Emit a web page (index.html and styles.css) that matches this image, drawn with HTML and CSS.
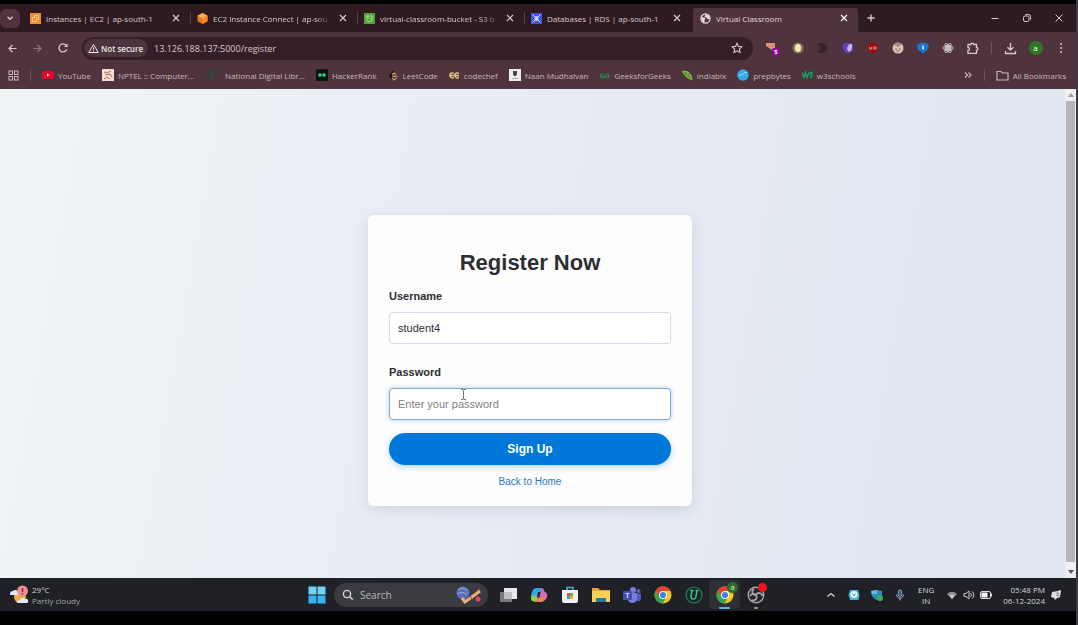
FILE: index.html
```html
<!DOCTYPE html>
<html lang="en">
<head>
<meta charset="utf-8">
<title>Virtual Classroom</title>
<link rel="stylesheet" href="styles.css">
</head>
<body>
<svg class="defs" aria-hidden="true">
  <symbol id="close" viewBox="0 0 10 10"><path d="M2 2l6 6M8 2l-6 6" fill="none" stroke="currentColor" stroke-width="1.2"/></symbol>
  <symbol id="chrome" viewBox="0 0 18 18">
    <circle cx="9" cy="9" r="8.5" fill="#f8c51c"/>
    <path d="M1.6 4.8A8.5 8.5 0 0 1 16.4 4.8L9 5 5.500 11z" fill="#e8402f"/>
    <path d="M1.600 4.800A8.500 8.500 0 0 0 8.600 17.500L12.400 11 9 9 5.500 11z" fill="#34a350"/>
    <circle cx="9" cy="9" r="4" fill="#fff"/><circle cx="9" cy="9" r="3.100" fill="#3f82ee"/>
  </symbol>
</svg>

<div class="screen">
  <header class="browser">
    <div class="tabs">
      <button class="tab-search" aria-label="Search tabs"><svg viewBox="0 0 10 10" class="i10"><path d="M2.500 3.800L5 6.300l2.500-2.500" fill="none" stroke="currentColor" stroke-width="1.400"/></svg></button>
      <div class="tab">
        <svg class="i11" viewBox="0 0 11 11"><rect width="11" height="11" fill="#ee8e35"/><path d="M2.500 4.500h4v4h-4zM4.500 4.500v-2h4v4h-2" fill="none" stroke="#ffc98c"/></svg>
        <span class="tab-title">Instances | EC2 | ap-south-1</span>
        <button class="tab-close" aria-label="Close tab"><svg class="i10"><use href="#close"/></svg></button>
      </div>
      <div class="tab">
        <svg class="i11" viewBox="0 0 11 11"><path d="M5.500 0l5 2.800v5.400l-5 2.800-5-2.800V2.800z" fill="#e9771b"/><path d="M5.500 0l5 2.800-5 2.700-5-2.700z" fill="#ffae55"/><path d="M5.500 5.500l5-2.700v5.400l-5 2.800z" fill="#f58a2b"/></svg>
        <span class="tab-title fade">EC2 Instance Connect | ap-sou</span>
        <button class="tab-close" aria-label="Close tab"><svg class="i10"><use href="#close"/></svg></button>
      </div>
      <div class="tab">
        <svg class="i11" viewBox="0 0 11 11"><rect width="11" height="11" fill="#53a43c"/><path d="M2.500 3h6l-1 5.500h-4zM2.500 3l4 3h3" fill="none" stroke="#a5d68d"/></svg>
        <span class="tab-title fade">virtual-classroom-bucket - S3 b</span>
        <button class="tab-close" aria-label="Close tab"><svg class="i10"><use href="#close"/></svg></button>
      </div>
      <div class="tab">
        <svg class="i11" viewBox="0 0 11 11"><rect width="11" height="11" fill="#4054de"/><path d="M1.500 1.500l2.500 2.500M9.500 1.500L7 4M1.500 9.500L4 7M9.500 9.500L7 7" stroke="#dfe3ff"/><ellipse cx="5.500" cy="5.500" rx="2" ry="2.500" fill="#c6d0ff"/></svg>
        <span class="tab-title">Databases | RDS | ap-south-1</span>
        <button class="tab-close" aria-label="Close tab"><svg class="i10"><use href="#close"/></svg></button>
      </div>
      <div class="tab active">
        <svg class="i11" viewBox="0 0 11 11"><circle cx="5.500" cy="5.500" r="4.600" fill="#4f343e" stroke="#e4dadd" stroke-width="1.200"/><path d="M1.500 4l3 .5 1 1.500-1 1v2.500C2 9 .8 6 1.500 4zM5.500 1l3.500 1.500 1 3-2 1-1.500-2-2-.5z" fill="#e4dadd"/></svg>
        <span class="tab-title">Virtual Classroom</span>
        <button class="tab-close" aria-label="Close tab"><svg class="i10"><use href="#close"/></svg></button>
      </div>
      <button class="new-tab" aria-label="New tab"><svg class="i10" viewBox="0 0 10 10"><path d="M5 1.500v7M1.500 5h7" stroke="currentColor" stroke-width="1.400"/></svg></button>
      <div class="window-controls">
        <button aria-label="Minimize"><svg class="i10" viewBox="0 0 10 10"><path d="M1.500 5.500h7" stroke="currentColor"/></svg></button>
        <button aria-label="Restore"><svg class="i10" viewBox="0 0 10 10"><rect x="1.500" y="3" width="5.500" height="5.500" rx="1.500" fill="none" stroke="currentColor"/><path d="M3.500 1.500h3a2 2 0 0 1 2 2v3" fill="none" stroke="currentColor"/></svg></button>
        <button aria-label="Close"><svg class="i10" viewBox="0 0 10 10"><path d="M1.500 1.500l7 7M8.500 1.500l-7 7" stroke="currentColor"/></svg></button>
      </div>
    </div>

    <div class="toolbar">
      <button class="slot" aria-label="Back"><svg class="i11" viewBox="0 0 12 12"><path d="M10.500 6H2.200M6 2.200L2.200 6 6 9.800" fill="none" stroke="currentColor" stroke-width="1.300"/></svg></button>
      <button class="slot dim" aria-label="Forward"><svg class="i11" viewBox="0 0 12 12"><path d="M1.500 6h8.300M6 2.200L9.800 6 6 9.800" fill="none" stroke="currentColor" stroke-width="1.300"/></svg></button>
      <button class="slot" aria-label="Reload"><svg class="i12" viewBox="0 0 12 12"><path d="M9.800 7.200A4 4 0 1 1 9 3.300l1 1" fill="none" stroke="currentColor" stroke-width="1.300"/><path d="M10.600 1.500v3.600H7z" fill="currentColor"/></svg></button>
      <div class="address">
        <button class="security"><svg class="i11" viewBox="0 0 11 11"><path d="M5.500 1.500l4.700 8H.8zM5.500 4.500v2.300M5.500 7.500v1" fill="none" stroke="currentColor"/></svg>Not secure</button>
        <input class="url" type="text" aria-label="Address" value="13.126.188.137:5000/register">
        <button class="star" aria-label="Bookmark this page"><svg class="i12" viewBox="0 0 12 12"><path d="M6 1.300l1.400 3.100 3.400.4-2.500 2.300.7 3.400L6 8.800l-3 1.700.7-3.400L1.200 4.800l3.400-.4z" fill="none" stroke="currentColor" stroke-width="1.100"/></svg></button>
      </div>
      <div class="extensions">
        <button class="slot" aria-label="Extension 1"><svg class="i16" viewBox="0 0 16 16"><path d="M1 3h9v5l-3 2-6-4z" fill="#d9967c"/><rect x="7" y="8" width="8" height="8" rx="2" fill="#8c098f"/><path d="M12.300 10.300h-2.500v1.600h2v1.800H9.600" fill="none" stroke="#fff" stroke-width=".9"/></svg></button>
        <button class="slot" aria-label="Extension 2"><svg class="i12" viewBox="0 0 12 12"><circle cx="6" cy="6" r="5.500" fill="#88745f"/><ellipse cx="6" cy="6" rx="3" ry="4" fill="#efedb3"/></svg></button>
        <button class="slot" aria-label="Extension 3"><svg class="i12" viewBox="0 0 12 12"><path d="M0 1h7l4 5-4 5H0l4-5z" fill="#352329"/></svg></button>
        <button class="slot" aria-label="Extension 4"><svg class="i12" viewBox="0 0 12 12"><path d="M6 .5l5 1.500v4c0 3-2.500 4.500-5 5.500C3.500 10.500 1 9 1 6V2z" fill="#6442bd"/><path d="M7 2.500l3-.5v4c-.3 2-1.500 3-3 4-3-3-2-5 0-7.500z" fill="#c7b6f4"/></svg></button>
        <button class="slot" aria-label="Extension 5"><svg class="i12" viewBox="0 0 12 12"><path d="M1 1.500L6 1l5 .5V7c0 2-3 3.500-5 4.500C4 10.500 1 9 1 7z" fill="#9c0e12"/><path d="M2.500 5v2h2V5m2 0v2h2.500V5H6.500" fill="none" stroke="#e59a92" stroke-width=".9"/></svg></button>
        <button class="slot" aria-label="Extension 6"><svg class="i12" viewBox="0 0 12 12"><circle cx="6" cy="6" r="5.500" fill="#dcc5b4"/><path d="M2 3c2-3 6-3 8 0L6 5z" fill="#a88a7a"/><path d="M3 7h2M7 7h2M4.500 9h3" stroke="#8b6258"/></svg></button>
        <button class="slot" aria-label="Extension 7"><svg class="i12" viewBox="0 0 12 12"><path d="M.5 2L6 .5 11.500 2v5L6 11.500.5 7z" fill="#1876d1"/><path d="M6 3.500v4" stroke="#fff" stroke-width="1.400"/></svg></button>
        <button class="slot" aria-label="Extension 8"><svg class="i12" viewBox="0 0 12 12"><g fill="none" stroke="#b9a6b0" stroke-width="1.100"><ellipse cx="6" cy="6" rx="5" ry="2"/><ellipse cx="6" cy="6" rx="5" ry="2" transform="rotate(60 6 6)"/><ellipse cx="6" cy="6" rx="5" ry="2" transform="rotate(120 6 6)"/></g><circle cx="6" cy="6" r="3.500" fill="#c9b9c2"/></svg></button>
        <button class="slot" aria-label="Extensions"><svg class="i13" viewBox="0 0 13 13"><path d="M2 2.500h3a1.400 1.400 0 0 1 2.800 0h2.700v3a1.400 1.400 0 0 1 0 2.800v3H2V8.500a1.500 1.500 0 0 0 0-3z" fill="none" stroke="currentColor" stroke-width="1.300"/></svg></button>
        <span class="rule"></span>
        <button class="slot" aria-label="Downloads"><svg class="i13" viewBox="0 0 13 13"><path d="M6.500 1v7M3.500 5.200l3 3 3-3M1.500 9v2.500h10V9" fill="none" stroke="currentColor" stroke-width="1.300"/></svg></button>
        <button class="slot" aria-label="Profile"><span class="avatar">a</span></button>
        <button class="slot" aria-label="Menu"><svg class="i12" viewBox="0 0 12 12" fill="currentColor"><circle cx="6" cy="2" r="1"/><circle cx="6" cy="6" r="1"/><circle cx="6" cy="10" r="1"/></svg></button>
      </div>
    </div>

    <nav class="bookmarks" aria-label="Bookmarks">
      <button class="apps" aria-label="Apps"><svg class="i11" viewBox="0 0 11 11" fill="none" stroke="currentColor"><rect x="1" y="1" width="3.500" height="3.500"/><rect x="6.500" y="1" width="3.500" height="3.500"/><rect x="1" y="6.500" width="3.500" height="3.500"/><rect x="6.500" y="6.500" width="3.500" height="3.500"/></svg></button>
      <span class="rule"></span>
      <a href="#"><svg class="i12" viewBox="0 0 12 12"><rect y="2" width="12" height="8" rx="2.500" fill="#e3082c"/><path d="M5 4.500v3L7.500 6z" fill="#fff"/></svg>YouTube</a>
      <a href="#"><svg class="i12" viewBox="0 0 12 12"><rect width="12" height="12" fill="#f0ded1"/><path d="M2 3l3 1 4-2M3 6l5-1 2 3M2 10l3-2 3 2" fill="none" stroke="#b56d62"/></svg>NPTEL :: Computer...</a>
      <a href="#"><svg class="i16" viewBox="0 0 16 16"><circle cx="6" cy="8" r="5" fill="#3f3e3c"/><path d="M4 5h4v6H4z" fill="#38463a"/></svg>National Digital Libr...</a>
      <a href="#"><svg class="i12" viewBox="0 0 12 12"><rect width="12" height="12" rx="1.500" fill="#09150f"/><path d="M2.500 4.500v3h3v-3zM6.500 4.500v3h3v-3z" fill="#41d98c"/></svg>HackerRank</a>
      <a href="#"><svg class="i11" viewBox="0 0 11 11"><path d="M6 1L2 5.500 5 9.500" fill="none" stroke="#19110f" stroke-width="1.700"/><path d="M4 4.500L6 3l2 1.500M4 8l2 2 2.500-2" fill="none" stroke="#d69c44" stroke-width="1.300"/><path d="M4.500 6.300h5" stroke="#c4b6b4"/></svg>LeetCode</a>
      <a href="#"><svg class="i11" viewBox="0 0 11 11"><path d="M5 3.500C1.500 1.500 0 5 1.500 7c1 1.500 2.500 1 3.500.5M1.500 5.500H5M10 3.500c-3.500-2-5 1.500-3.500 3.500 1 1.500 2.500 1 3.500.5M6.500 5.500H10" fill="none" stroke="#e6cc82" stroke-width="1.300"/></svg>codechef</a>
      <a href="#"><svg class="i12" viewBox="0 0 12 12"><rect width="12" height="12" fill="#eee"/><path d="M4 2h4v3L7 7H5L4 5z" fill="#444"/><path d="M3 9.500h6" stroke="#aaa"/></svg>Naan Mudhalvan</a>
      <a href="#"><svg class="i11" viewBox="0 0 11 11"><path d="M4.500 4C1 2.500 0 8 3 8c1.500 0 2-1 2-2H1M6.500 4C10 2.500 11 8 8 8 6.500 8 6 7 6 6h4" fill="none" stroke="#298348" stroke-width="1.200"/></svg>GeeksforGeeks</a>
      <a href="#"><svg class="i11" viewBox="0 0 11 11"><path d="M0 1c6-1 10 2 10.500 9.500C6 9 2 6 0 1z" fill="#84ba3d"/><path d="M1.500 2l8 7M4 2v3M7 3v4" stroke="#46702b" stroke-width=".8"/></svg>indiabix</a>
      <a href="#"><svg class="i12" viewBox="0 0 12 12"><circle cx="6" cy="6" r="5.700" fill="#35a9ee"/><path d="M2 7c2-3 3 0 4-2s3-2 4-1" fill="none" stroke="#a8e1ff"/></svg>prepbytes</a>
      <a href="#"><svg class="i11" viewBox="0 0 11 11"><path d="M0 2.500l2 5 1.500-5 1.500 5 2-5M7.500 2.500h2.800L8.500 4.500c2 0 2 3-.5 3" fill="none" stroke="#18a066" stroke-width="1.500"/></svg>w3schools</a>
      <button class="more" aria-label="More bookmarks"><svg class="i10" viewBox="0 0 10 10"><path d="M2 2.500L4.500 5 2 7.500M5.500 2.500L8 5 5.500 7.500" fill="none" stroke="currentColor" stroke-width="1.100"/></svg></button>
      <span class="rule"></span>
      <a href="#" class="all"><svg class="i13" viewBox="0 0 13 13"><path d="M1 2.500h4l1.500 1.500H12v7H1z" fill="none" stroke="currentColor" stroke-width="1.200"/></svg>All Bookmarks</a>
    </nav>
  </header>

  <div class="viewport">
    <main class="page">
      <form class="card">
        <h1>Register Now</h1>
        <label for="username">Username</label>
        <input id="username" type="text" placeholder="Enter your username" value="student4">
        <label for="password">Password</label>
        <div class="field">
          <input id="password" class="focused" type="password" placeholder="Enter your password">
          <svg class="cursor" viewBox="0 0 7 11" aria-hidden="true"><path d="M1 .5h2l.5.5.5-.5h2M3.500 1v9M1 10.500h2l.5-.5.5.5h2" fill="none" stroke="#777"/></svg>
        </div>
        <button type="button" class="submit">Sign Up</button>
        <a class="home" href="#">Back to Home</a>
      </form>
    </main>
    <div class="scrollbar" aria-hidden="true"><span class="arrow up"></span><span class="thumb"></span><span class="arrow down"></span></div>
  </div>

  <footer class="taskbar">
    <button class="weather">
      <svg class="i20" viewBox="0 0 20 20"><circle cx="11" cy="12" r="6" fill="#efad47"/><path d="M1 9a3 3 0 0 1 3-3 3 3 0 0 1 5 1l1 3H1zM8 18a3 3 0 0 1 3-3 3 3 0 0 1 5-1 2 2 0 0 1 2 4z" fill="#e2e9fb"/><circle cx="13.500" cy="6" r="5.500" fill="#ed8d93"/><path d="M13.500 3v4M13.500 8v1.200" stroke="#6d1b25" stroke-width="1.300"/></svg>
      <span>29°C<br><span class="muted">Partly cloudy</span></span>
    </button>
    <div class="dock">
      <button class="start" aria-label="Start"><svg class="i18" viewBox="0 0 18 18"><path d="M.5.500h8v8h-8zM9.500.500h8v8h-8z" fill="#6fd3f8"/><path d="M.5 9.500h8v8h-8zM9.500 9.500h8v8h-8z" fill="#35b3f3"/></svg></button>
      <label class="search">
        <svg class="i12" viewBox="0 0 12 12"><circle cx="5" cy="5" r="3.600" fill="none" stroke="currentColor" stroke-width="1.400"/><path d="M7.800 7.800l3 3" stroke="currentColor" stroke-width="1.600"/></svg>
        <input type="text" placeholder="Search" aria-label="Search">
        <svg class="art" viewBox="0 0 28 18"><circle cx="8" cy="7" r="6.500" fill="#5870b8"/><path d="M3 4c3-3 7-2 9 1M2 8c3-2 8-2 10 1" fill="none" stroke="#99aee8"/><path d="M7 12l3 4L25 5" fill="none" stroke="#e5b178" stroke-width="3"/><path d="M14 9l4 5M21 5l4-3" stroke="#9c4c38"/><circle cx="23" cy="13" r="2.500" fill="#e14568"/></svg>
      </label>
      <button class="app" aria-label="Task view"><svg class="i18" viewBox="0 0 18 18"><rect x="1" y="6" width="12" height="10" fill="#77797e"/><rect x="5" y="2" width="13" height="11" fill="#e8e8e8"/><path d="M5 6h8v7H5z" fill="#bfc0c2"/></svg></button>
      <button class="app" aria-label="Copilot"><svg class="i18" viewBox="0 0 18 18"><path d="M6 2h6l1 3-3 1-2 8-6 1C-.5 12 2 2 6 2z" fill="#30a6e5"/><path d="M1 10l5-1 2 5-2 2C2 16 .5 13 1 10z" fill="#93c74f"/><path d="M12 2c1.500 0 2 3 3 4 5 2 1 10-4 10H6l2-3 3-8z" fill="#d666bd"/><path d="M8 12l7-2c0 4-2 6-5 6H6z" fill="#f08051"/><path d="M8 6h2.500l-1 5.500H7z" fill="#24262b"/></svg></button>
      <button class="app" aria-label="Store"><svg class="i18" viewBox="0 0 18 18"><path d="M6 4V1.500h6V4" fill="none" stroke="#45aee0" stroke-width="1.500"/><path d="M1 4h16v11a2 2 0 0 1-2 2H3a2 2 0 0 1-2-2z" fill="#f0f0f0"/><path d="M6 7h3v3H6z" fill="#e25534"/><path d="M9 7h3v3H9z" fill="#73ae42"/><path d="M6 10h3v3H6z" fill="#389edc"/><path d="M9 10h3v3H9z" fill="#f0b42d"/></svg></button>
      <button class="app" aria-label="File Explorer"><svg class="i18" viewBox="0 0 18 18"><path d="M0 2h6l2 2h10v12H0z" fill="#e5a82d"/><path d="M0 5h18v11H0z" fill="#fad158"/><path d="M4 16v-4h10v4z" fill="#2379a7"/></svg></button>
      <button class="app" aria-label="Teams"><svg class="i18" viewBox="0 0 18 18"><circle cx="10" cy="4" r="3" fill="#7880df"/><circle cx="15.500" cy="5" r="2" fill="#5861bd"/><path d="M12 7.500h6V12c0 3-2 4-4 3z" fill="#515abb"/><path d="M5 7h9v6c0 5-8 5-9 1z" fill="#767ee0"/><rect y="5" width="9" height="9" rx="1" fill="#4850ad"/><path d="M2.500 7.500h4M4.500 7.500v4.500" stroke="#cdd0f5" stroke-width="1.200"/></svg></button>
      <button class="app" aria-label="Chrome"><svg class="i18"><use href="#chrome"/></svg></button>
      <button class="app" aria-label="Iobit Uninstaller"><svg class="i18" viewBox="0 0 18 18"><circle cx="9" cy="9" r="8" fill="#142a25" stroke="#2f7d5b" stroke-width="1.200"/><path d="M7 4.500L6 10c-.5 4 4.500 4 5 .5l1-6M5.500 4.500h3M10.500 4.500h3" fill="none" stroke="#48ba87" stroke-width="1.500"/></svg></button>
      <button class="app running" aria-label="Chrome, profile a"><svg class="i18"><use href="#chrome"/></svg><span class="badge">a</span></button>
      <button class="app idle" aria-label="OBS Studio"><svg class="i18" viewBox="0 0 18 18"><circle cx="9" cy="9" r="7.800" fill="#25262a" stroke="#a7a8ab" stroke-width="1.400"/><path d="M9 9C5 9 4 5 7 3M9 9c2-3.500 6-2 6.500 1M9 9c2 3.500-1 6.500-4.500 5M9 9c-2-2-5-1-6 1" fill="none" stroke="#a7a8ab" stroke-width="1.700"/></svg><span class="record"></span></button>
    </div>
    <div class="tray">
      <button aria-label="Hidden icons"><svg class="i12" viewBox="0 0 12 12"><path d="M2.500 7.500L6 4.500l3.500 3" fill="none" stroke="currentColor" stroke-width="1.300"/></svg></button>
      <button aria-label="Sync"><svg class="i12" viewBox="0 0 12 12"><path d="M2 1h8l1.500 5-1 5H2L.5 6z" fill="#49afd8"/><circle cx="6" cy="5.500" r="3.600" fill="#e1f4fb"/><path d="M4.500 4.500L6 7l1.500-2.500" fill="none" stroke="#5a9cc0"/></svg></button>
      <button aria-label="Security"><svg class="i12" viewBox="0 0 12 12"><path d="M0 2l6-1 5 1v4c0 3-3 4-5 5C2 10 0 6 0 2z" fill="#2b8dbb"/><path d="M0 2l6-1v4H1z" fill="#58bde3"/><circle cx="9" cy="9" r="3" fill="#35b34e"/></svg></button>
      <button aria-label="Microphone"><svg class="i12" viewBox="0 0 12 12"><rect x="4.300" y="1" width="3.400" height="6.500" rx="1.700" fill="#315c78" stroke="#9fb9c8" stroke-width=".8"/><path d="M2.700 5.500c0 5 6.600 5 6.600 0M6 9v2.500" fill="none" stroke="#9fb9c8"/></svg></button>
      <button class="lang">ENG<br>IN</button>
      <button class="status" aria-label="Network, volume, battery">
        <svg class="i12" viewBox="0 0 12 12"><path d="M1 5c3-3 7-3 10 0L6 10.500z" fill="#8d8e91"/><path d="M3.500 6.500c2-1.500 3-1.500 5 0L6 9.500z" fill="#ccc"/></svg>
        <svg class="i12" viewBox="0 0 12 12"><path d="M1 4.500h2L6 2v8L3 7.500H1zM7.500 4c1 1 1 3 0 4M9.300 2.500c2 2 2 5 0 7" fill="none" stroke="#c6c6c8"/></svg>
        <svg class="i12" viewBox="0 0 12 12"><rect x=".5" y="2.500" width="10" height="7" rx="1.500" fill="none" stroke="#ddd"/><path d="M1.500 3.500h6v5h-6z" fill="#f5f5f5"/><path d="M11.500 4.500v3" stroke="#ddd"/></svg>
      </button>
      <button class="clock">05:48 PM<br>06-12-2024</button>
      <button aria-label="Notifications"><svg class="i12" viewBox="0 0 12 12"><path d="M2 3l6-1 2-1 1 1-1 6-3 1-2 2-1-2-3-1z" fill="#e0e0e2"/><path d="M6 4h3L6.500 6.500h3" fill="none" stroke="#777" stroke-width=".8"/></svg></button>
    </div>
  </footer>
</div>
</body>
</html>
```
FILE: styles.css
```css
* { box-sizing: border-box; }

html, body { height: 100%; }

body {
  margin: 0;
  background: #000;
  font-family: "Open Sans", "Noto Sans", sans-serif;
  font-size: 8px;
}

button, input {
  font: inherit;
  color: inherit;
  background: none;
  border: 0;
  padding: 0;
  margin: 0;
  outline: 0;
}

a { color: inherit; text-decoration: none; }
svg { flex: none; display: block; }

.defs { display: none; }
.i10 { width: 10px; height: 10px; }
.i11 { width: 11px; height: 11px; }
.i12 { width: 12px; height: 12px; }
.i13 { width: 13px; height: 13px; }
.i16 { width: 16px; height: 16px; }
.i18 { width: 18px; height: 18px; }
.i20 { width: 20px; height: 20px; }

.screen {
  display: flex;
  flex-direction: column;
  min-height: 100vh;
  padding: 4px 0 14px;
  border-right: 2px solid #3c3d40;
}

/* Browser chrome */
.browser { background: #4f343e; color: #d8c9ce; }

.tabs {
  display: flex;
  align-items: center;
  height: 28px;
  background: #301a22;
}

.tab-search {
  display: grid;
  place-items: center;
  width: 20px;
  height: 19px;
  margin-right: 3px;
  border-radius: 6px;
  background: #4f343e;
}

.tab {
  display: flex;
  flex: 0 1 167px;
  align-items: center;
  gap: 5px;
  min-width: 0;
  height: 24px;
  padding: 0 9px 0 7px;
  position: relative;
}

.tab + .tab:not(.active)::before {
  content: "";
  position: absolute;
  left: 0;
  width: 1px;
  height: 12px;
  background: #55404a;
}

.tab.active {
  flex-basis: 165px;
  height: 28px;
  margin-left: 2px;
  background: linear-gradient(#4f343e, #4f343e) 0 4px no-repeat;
  border-radius: 8px 8px 0 0;
  color: #e2d5d9;
}

.tab.active .tab-close { color: #fff; }

.tab-title {
  flex: 1;
  overflow: hidden;
  white-space: nowrap;
}

.tab-title.fade { mask-image: linear-gradient(to right, #000 85%, transparent); }

.tab-close, .new-tab { flex: none; }
.new-tab { margin-left: 8px; }

.window-controls {
  display: flex;
  gap: 22px;
  margin-left: auto;
  padding-right: 12px;
}

.toolbar {
  display: flex;
  align-items: center;
  height: 32px;
}

.slot {
  display: grid;
  place-items: center;
  flex: none;
  width: 25px;
  height: 24px;
}

.dim { color: #8d737d; }

.address {
  display: flex;
  flex: 1;
  align-items: center;
  height: 23px;
  margin: 0 7px;
  padding: 0 10px 0 2px;
  border-radius: 12px;
  background: #351e27;
}

.security {
  display: flex;
  align-items: center;
  gap: 2px;
  height: 18px;
  padding: 0 5px 0 4px;
  border-radius: 9px;
  background: #4b343d;
  color: #f0e6e9;
  font-weight: 600;
}

.url {
  flex: 1;
  min-width: 0;
  margin-left: 6px;
  font-size: 9px;
}

.extensions { display: flex; align-items: center; padding-right: 3px; }

.rule { width: 1px; height: 12px; background: #6d525c; }
.extensions .rule { margin: 0 6px; }

.avatar {
  width: 14px;
  height: 14px;
  border-radius: 50%;
  background: #2d7726;
  color: #fff;
  line-height: 13px;
}

.bookmarks {
  display: flex;
  align-items: center;
  gap: 11px;
  height: 25px;
  padding: 0 10px 3px 8px;
  color: #c9b6bd;
  white-space: nowrap;
}

.bookmarks a { display: flex; align-items: center; gap: 4px; }
.bookmarks .more { margin-left: auto; }

/* Web page */
.viewport { display: flex; flex: 1; }

.page {
  display: flex;
  flex: 1;
  align-items: center;
  justify-content: center;
  padding: 54px 5px 0 0;
  background: linear-gradient(100deg, #eff4f5, #e8ecf5 45%, #dfe6ef);
  font-family: "Liberation Sans", Arial, sans-serif;
  font-size: 11px;
}

.card {
  display: flex;
  flex-direction: column;
  width: 100%;
  max-width: 324px;
  padding: 34px 21px 17px;
  border-radius: 6px;
  background: #fdfdfe;
  box-shadow: 0 4px 14px rgba(60, 70, 90, 0.14);
  color: #2e2e32;
}

.card h1 {
  margin: 0 0 12px;
  font-size: 22px;
  line-height: 28px;
  text-align: center;
}

.card label {
  margin-bottom: 9px;
  font-weight: bold;
  line-height: 14px;
}

.card input {
  width: 100%;
  height: 32px;
  padding: 0 8px;
  border: 1px solid #d0dbe6;
  border-radius: 4px;
  background: #fff;
}

#username { margin-bottom: 21px; }

.card input::placeholder { color: #808084; opacity: 1; }

.card input.focused {
  border-color: #7fa7d9;
  box-shadow: 0 0 4px rgba(0, 120, 220, 0.35);
}

.field { position: relative; margin-bottom: 13px; }

.cursor {
  position: absolute;
  top: 1px;
  left: 71px;
  width: 7px;
  height: 11px;
}

.submit {
  height: 32px;
  border-radius: 16px;
  background: #0078d9;
  box-shadow: 0 2px 6px rgba(0, 120, 217, 0.3);
  color: #fff;
  font-size: 12px;
  font-weight: bold;
}

.home {
  align-self: center;
  margin-top: 10px;
  color: #2579be;
  font-size: 10px;
  line-height: 14px;
}

.scrollbar {
  display: flex;
  flex-direction: column;
  align-items: center;
  gap: 4px;
  width: 11px;
  padding: 4px 0;
  background: #efeff1;
}

.thumb { flex: 1; width: 9px; margin-bottom: 4px; background: #b4b5b9; }
.arrow { border: 3px solid transparent; }
.arrow.up { border-top: 0; border-bottom: 4px solid #999; }
.arrow.down { border-bottom: 0; border-top: 4px solid #555; }

/* Taskbar */
.taskbar {
  display: grid;
  grid-template-columns: 1fr auto 1fr;
  align-items: center;
  height: 33px;
  background: #1f2126;
  color: #d7d7d9;
}

.weather {
  display: flex;
  align-items: center;
  gap: 3px;
  padding-left: 9px;
  line-height: 11px;
  text-align: left;
}

.muted { color: #a5a6a9; }

.dock { display: flex; align-items: center; padding-left: 3px; }
.start { margin-right: 8px; }

.search {
  display: flex;
  align-items: center;
  gap: 6px;
  width: 154px;
  height: 24px;
  margin-right: 4px;
  padding: 0 5px 0 8px;
  border-radius: 12px;
  background: #3a3b40;
}

.search input { flex: 1; min-width: 0; font-size: 10px; }
.search input::placeholder { color: #b8b8bb; opacity: 1; }
.art { width: 28px; height: 18px; }

.app {
  display: grid;
  place-items: center;
  position: relative;
  width: 31px;
  height: 29px;
}

.running { border-radius: 4px; background: #2d2f34; }

.running::after, .idle::after {
  content: "";
  position: absolute;
  bottom: 0;
  width: 4px;
  height: 2px;
  border-radius: 1px;
  background: #999;
}

.running::after { width: 11px; background: #55b7dd; }

.badge {
  position: absolute;
  top: 2px;
  right: 2px;
  width: 11px;
  height: 11px;
  border-radius: 50%;
  background: #2c6c2a;
  color: #d8edd5;
  line-height: 10px;
}

.record {
  position: absolute;
  top: 3px;
  right: 4px;
  width: 9px;
  height: 9px;
  border-radius: 50%;
  background: #f0151b;
}

.tray {
  display: flex;
  align-items: center;
  justify-content: flex-end;
  gap: 11px;
  padding-right: 14px;
  line-height: 11px;
}

.lang { margin: 0 1px; }
.status { display: flex; gap: 5px; }
.clock { text-align: right; }
.clock + button { margin-left: -6px; }
```
